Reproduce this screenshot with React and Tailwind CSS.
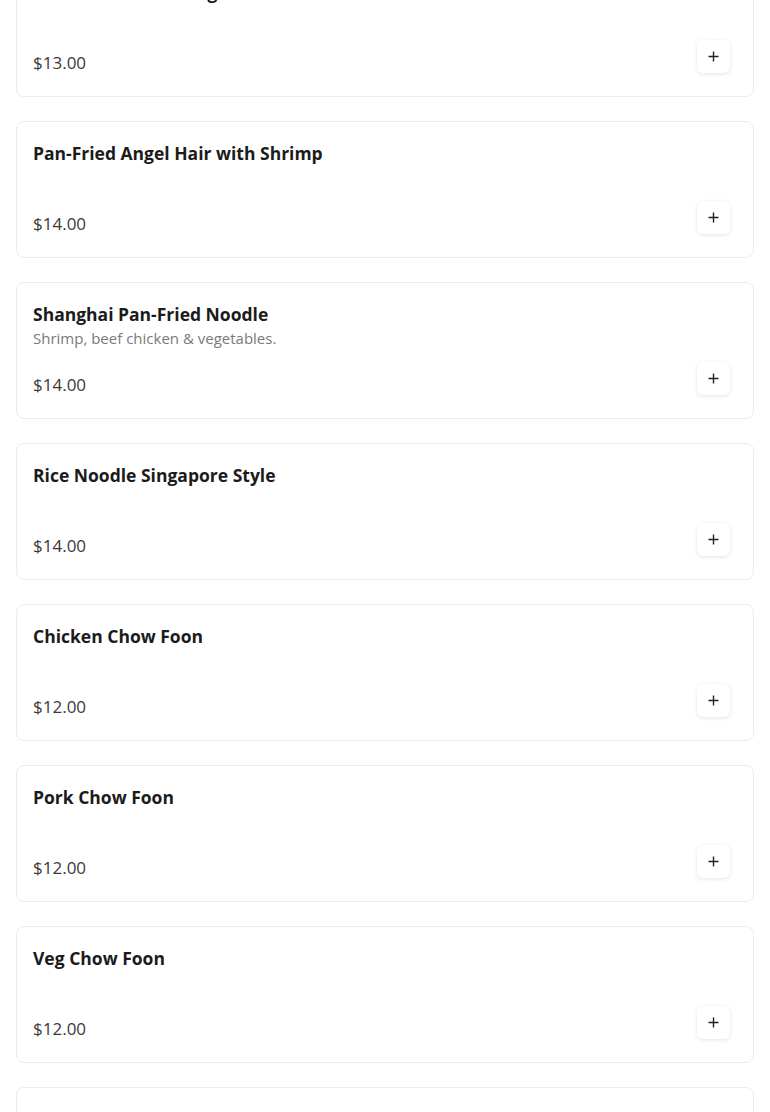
import React from "react";

const items = [
  { name: "Beef Chow Mein Ginger", price: "$13.00" },
  { name: "Pan-Fried Angel Hair with Shrimp", price: "$14.00" },
  {
    name: "Shanghai Pan-Fried Noodle",
    desc: "Shrimp, beef chicken & vegetables.",
    price: "$14.00",
  },
  { name: "Rice Noodle Singapore Style", price: "$14.00" },
  { name: "Chicken Chow Foon", price: "$12.00" },
  { name: "Pork Chow Foon", price: "$12.00" },
  { name: "Veg Chow Foon", price: "$12.00" },
  { name: "Beef Chow Foon", price: "$13.00" },
];

const PlusIcon = () => (
  <svg width="11" height="11" viewBox="0 0 11 11" fill="none">
    <path d="M5.5 0.5v10M0.5 5.5h10" stroke="#222" strokeWidth="1.4" />
  </svg>
);

const MenuCard = ({ item }) => (
  <div className="h-[137px] shrink-0 rounded-lg border border-[#ececec] bg-white p-4 flex flex-col justify-between">
    <div>
      <h3 className="mt-[1px] text-[17.5px] leading-7 font-bold text-[#1b1b1b]">
        {item.name}
      </h3>
      {item.desc && (
        <p className="-mt-[2px] text-[15px] leading-6 text-[#7a7a7a]">
          {item.desc}
        </p>
      )}
    </div>
    <div className="flex items-end justify-between">
      <span className="mb-[5px] text-[17px] leading-6 text-[#3a3a3a]">
        {item.price}
      </span>
      <button className="mb-[7px] mr-[7px] flex h-[33px] w-[33px] items-center justify-center rounded-md bg-white shadow-[0_1px_4px_rgba(0,0,0,0.11)]">
        <PlusIcon />
      </button>
    </div>
  </div>
);

export default function App() {
  return (
    <div
      className="h-[1112px] overflow-hidden bg-white"
      style={{ fontFamily: '"Open Sans", "Liberation Sans", sans-serif' }}
    >
      <div className="-mt-[40px] flex flex-col gap-6 px-4">
        {items.map((item, i) => (
          <MenuCard key={i} item={item} />
        ))}
      </div>
    </div>
  );
}
